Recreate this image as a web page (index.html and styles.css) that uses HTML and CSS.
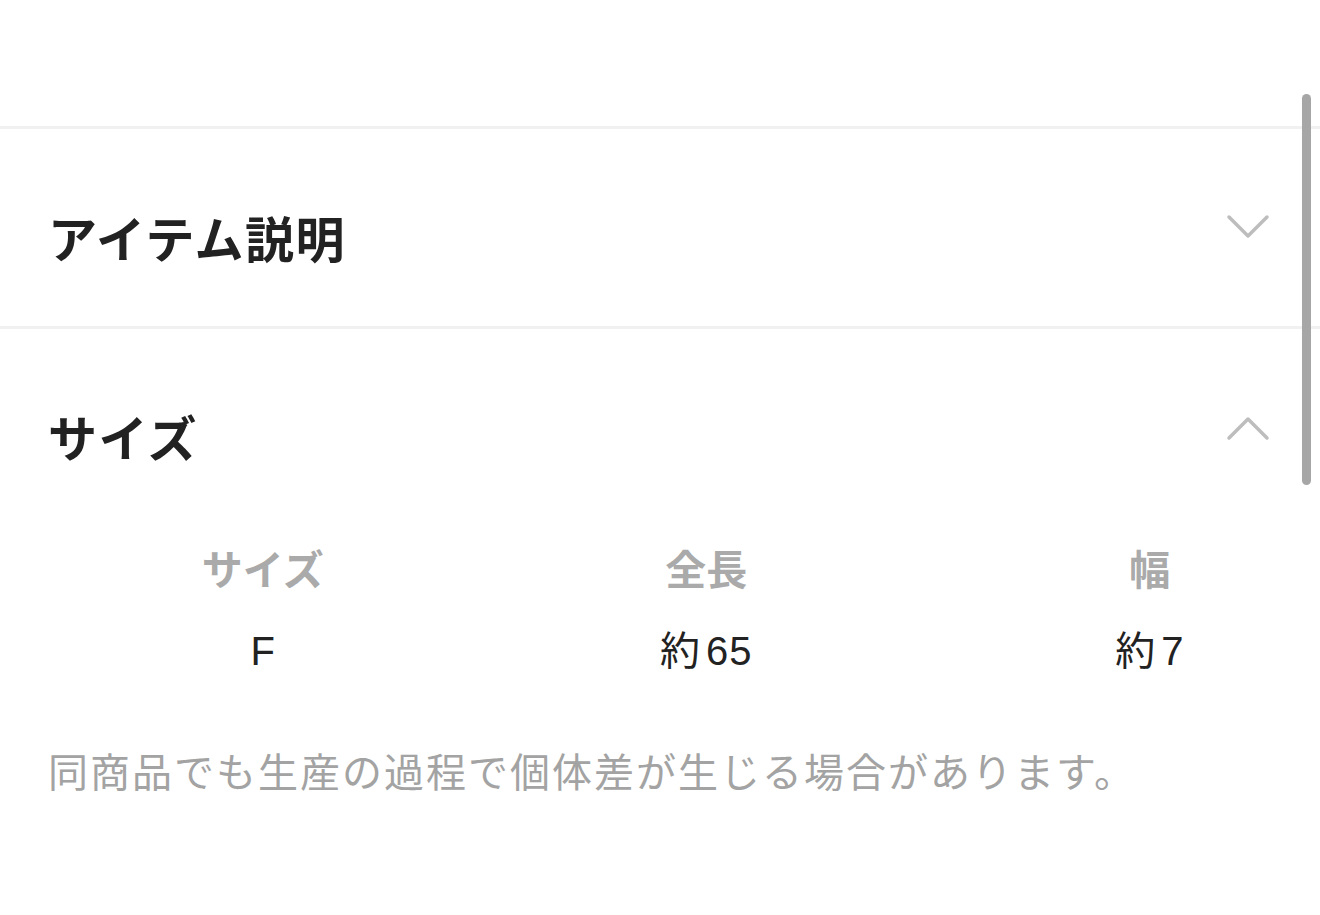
FILE: index.html
```html
<!DOCTYPE html>
<html lang="ja">
<head>
    <meta charset="UTF-8">
    <meta name="viewport" content="width=device-width, initial-scale=1.0">
    <title>サイズ</title>
    <link rel="stylesheet" href="styles.css">
</head>
<body>
    <div class="page">
        <div class="top"></div>

        <section class="acc">
            <div class="acc-head">
                <h2>アイテム説明</h2>
                <svg class="chev" width="44" height="27" viewBox="0 0 44 27">
                    <polyline points="3,3 22,22 41,3" />
                </svg>
            </div>
        </section>

        <section class="acc open">
            <div class="acc-head">
                <h2>サイズ</h2>
                <svg class="chev" width="44" height="27" viewBox="0 0 44 27">
                    <polyline points="3,23 22,4 41,23" />
                </svg>
            </div>
            <div class="acc-body">
                <div class="size-table">
                    <div class="th">サイズ</div>
                    <div class="th">全長</div>
                    <div class="th">幅</div>
                    <div class="td">F</div>
                    <div class="td">約<span class="num">65</span></div>
                    <div class="td">約<span class="num">7</span></div>
                </div>
                <p class="note">同商品でも生産の過程で個体差が生じる場合があります。</p>
            </div>
        </section>

        <!-- overlay scrollbar -->
        <div class="scrollbar"></div>
    </div>
</body>
</html>
```

FILE: styles.css
```css
*{
    margin:0;
    padding:0;
    box-sizing:border-box;
}
html,body{
    background:#fff;
}
body{
    font-family:"Noto Sans CJK JP","Noto Sans",sans-serif;
    color:#222;
}
.page{
    position:relative;
    width:1320px;
    height:915px;
    overflow:hidden;
}
.top{
    height:129px;
    border-bottom:3px solid #f1f1f1;
}
.acc{
    border-bottom:3px solid #f1f1f1;
}
.acc.open{
    border-bottom:none;
}
.acc-head{
    display:flex;
    justify-content:space-between;
    align-items:center;
    height:197px;
    padding:0 50px 0 48px;
}
.acc-head h2{
    font-size:49px;
    font-weight:700;
    letter-spacing:1.5px;
    padding-top:18px;
}
.open .acc-head h2{
    padding-top:16px;
}
.open .chev{
    margin-top:2px;
}
.chev{
    fill:none;
    stroke:#bdbdbd;
    stroke-width:3.5;
    stroke-linecap:round;
    stroke-linejoin:round;
}
.size-table{
    display:grid;
    grid-template-columns:repeat(3,443.5px);
    padding:11px 0 0 41px;
    text-align:center;
    font-size:40px;
}
.th{
    color:#aaa;
    font-weight:700;
    font-size:41px;
    height:82px;
}
.td{
    font-family:"Liberation Sans","Noto Sans CJK JP",sans-serif;
    line-height:64px;
    height:82px;
}
.num{
    margin-left:6px;
    letter-spacing:1px;
}
.note{
    margin:40px 0 0 48px;
    font-size:40px;
    letter-spacing:2px;
    color:#a3a3a3;
}
.scrollbar{
    position:absolute;
    top:94px;
    left:1302px;
    width:9px;
    height:391px;
    border-radius:5px;
    background:#a6a6a6;
}
```
